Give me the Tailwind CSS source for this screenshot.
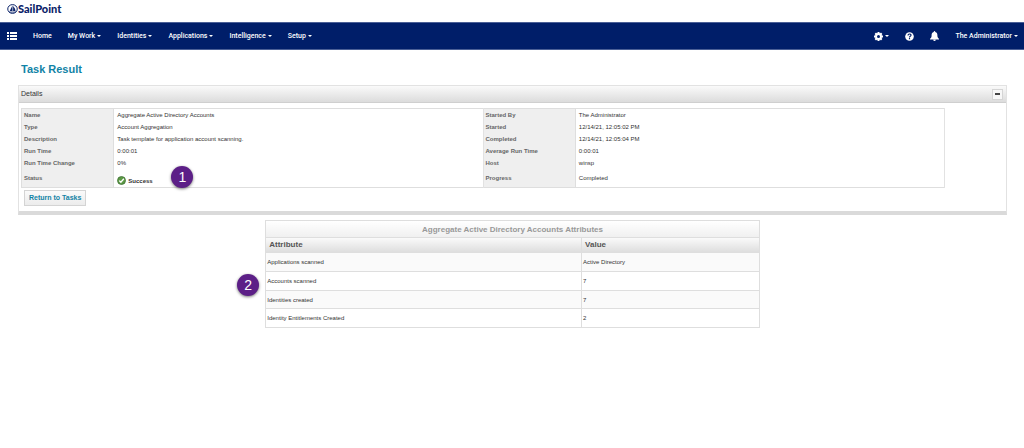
<!DOCTYPE html>
<html lang="en">
<head>
<meta charset="utf-8">
<title>Task Result</title>
<script src="https://cdn.jsdelivr.net/npm/@tailwindcss/browser@4"></script>
</head>
<body class="min-h-screen bg-white font-['Liberation_Sans',Arial,sans-serif] text-[6px] leading-[8px] text-[#333]">
<header>
  <a href="#" class="flex h-[22px] items-start pt-[3px] pl-[7px] text-[#0a2268]" aria-label="SailPoint">
    <svg class="mt-px h-[10px] w-[11px]" viewBox="0 0 22 20" fill="none" stroke="currentColor" stroke-width="2"><ellipse cx="11" cy="10" rx="9.5" ry="8.8"/><path d="M11 2.5V14H5.5Z" fill="currentColor" stroke="none"/><path d="M12.2 4C15 7 16.5 10 17 14H12.2Z" fill="currentColor" stroke="none"/><path d="M4 16.2h14" stroke-width="1.6"/></svg>
    <span class="font-[Lato,sans-serif] text-[11px] leading-[12px] font-black">SailPoint</span>
  </a>
  <nav class="flex h-[28px] items-center border-y border-[#4a5f96] bg-[#001e69] pr-[6px] pl-[7px] font-[Roboto,sans-serif] text-[7px] font-medium text-white">
    <button class="mr-4 h-[8px] w-[10px]" aria-label="Menu"><svg class="h-[8px] w-[10px]" viewBox="0 0 10 8" fill="currentColor"><path d="M0 0h2v2H0zM3 0h7v2H3zM0 3h2v2H0zM3 3h7v2H3zM0 6h2v2H0zM3 6h7v2H3z"/></svg></button>
    <div class="flex items-center gap-4">
      <a href="#">Home</a>
      <button class="flex items-center gap-[2px]">My Work <svg class="h-[2px] w-[4px]" viewBox="0 0 4 2" fill="currentColor"><path d="M0 0h4L2 2z"/></svg></button>
      <button class="flex items-center gap-[2px]">Identities <svg class="h-[2px] w-[4px]" viewBox="0 0 4 2" fill="currentColor"><path d="M0 0h4L2 2z"/></svg></button>
      <button class="flex items-center gap-[2px]">Applications <svg class="h-[2px] w-[4px]" viewBox="0 0 4 2" fill="currentColor"><path d="M0 0h4L2 2z"/></svg></button>
      <button class="flex items-center gap-[2px]">Intelligence <svg class="h-[2px] w-[4px]" viewBox="0 0 4 2" fill="currentColor"><path d="M0 0h4L2 2z"/></svg></button>
      <button class="flex items-center gap-[2px]">Setup <svg class="h-[2px] w-[4px]" viewBox="0 0 4 2" fill="currentColor"><path d="M0 0h4L2 2z"/></svg></button>
    </div>
    <div class="ml-auto flex items-center gap-4">
      <button class="flex items-center gap-[2px]" aria-label="Settings"><svg class="size-[9px]" viewBox="0 0 18 18"><g fill="currentColor"><circle cx="9" cy="9" r="6.8"/><path d="M7 0h4v18H7zM0 7h18v4H0z"/><path d="M7 0h4v18H7zM0 7h18v4H0z" transform="rotate(45 9 9)"/></g><circle cx="9" cy="9" r="3" fill="#001e69"/></svg> <svg class="h-[2px] w-[4px]" viewBox="0 0 4 2" fill="currentColor"><path d="M0 0h4L2 2z"/></svg></button>
      <button aria-label="Help"><svg class="size-[9px]" viewBox="0 0 18 18"><circle cx="9" cy="9" r="8.6" fill="currentColor"/><path d="M6 7c0-4 6-4 6-.6 0 2.2-3 2.2-3 4.4M9 12.2v2.4" fill="none" stroke="#001e69" stroke-width="2.3"/></svg></button>
      <button aria-label="Notifications"><svg class="h-[10px] w-[9px]" viewBox="0 0 18 20" fill="currentColor"><path d="M9 0c1 0 1.5.7 1.5 1.8C14 2.8 14.8 5.5 14.8 9c0 3.500 1.200 5 3.200 6.500V17H0v-1.500C2 14 3.200 12.500 3.200 9c0-3.500.8-6.200 4.300-7.200C7.500.7 8 0 9 0zM6.500 17.500h5a2.500 2.500 0 0 1-5 0z"/></svg></button>
      <button class="flex items-center gap-[2px]">The Administrator <svg class="h-[2px] w-[4px]" viewBox="0 0 4 2" fill="currentColor"><path d="M0 0h4L2 2z"/></svg></button>
    </div>
  </nav>
</header>
<main class="mr-[17px] ml-[18px]">
  <h1 class="pt-3 pb-[9px] pl-[3px] text-[11px] leading-[14px] font-bold text-[#1183a6]">Task Result</h1>
  <section class="border border-b-4 border-[#e2e2e2] border-b-[#dadada]">
    <div class="flex h-[17px] items-center justify-between border-b border-[#cfcfcf] bg-linear-to-b from-[#fafafa] to-[#dcdcdc] pr-[3px] pl-[2px]">
      <h2 class="text-[7px] font-normal">Details</h2>
      <button class="flex size-[11px] items-center justify-center border border-[#d5d5d5] bg-[#f7f7f7]" aria-label="Collapse"><span class="h-[2px] w-[5px] bg-[#444]"></span></button>
    </div>
    <div class="px-[2px] pt-[5px] pb-[5px]">
      <table class="w-[94%] table-fixed border-collapse border border-[#dedede] text-left [&_td]:border-r [&_td]:border-[#e2e2e2] [&_td]:pl-[3px] [&_th]:border-r [&_th]:border-[#dedede] [&_th]:bg-[#efefef] [&_th]:pl-[2px] [&_th]:text-[#666]">
        <colgroup><col class="w-1/10"><col class="w-4/10"><col class="w-1/10"><col class="w-4/10"></colgroup>
        <tbody>
          <tr class="h-[12px]"><th>Name</th><td>Aggregate Active Directory Accounts</td><th>Started By</th><td>The Administrator</td></tr>
          <tr class="h-[12px]"><th>Type</th><td>Account Aggregation</td><th>Started</th><td>12/14/21, 12:05:02 PM</td></tr>
          <tr class="h-[12px]"><th>Description</th><td>Task template for application account scanning.</td><th>Completed</th><td>12/14/21, 12:05:04 PM</td></tr>
          <tr class="h-[12px]"><th>Run Time</th><td>0:00:01</td><th>Average Run Time</th><td>0:00:01</td></tr>
          <tr class="h-[12px]"><th>Run Time Change</th><td>0%</td><th>Host</th><td>winsp</td></tr>
          <tr class="h-[19px]"><th>Status</th><td class="relative"><span class="flex items-center gap-[2px] pt-[6px] font-bold"><svg class="size-[9px]" viewBox="0 0 18 18"><circle cx="9" cy="9" r="8" fill="#5c9a45" stroke="#3c6e33" stroke-width="1.500"/><path d="M4.500 9.200l3.200 3.300 6-7" fill="none" stroke="#fff" stroke-width="2.600"/></svg>Success</span><span class="absolute -top-[3px] left-[57px] flex size-[22px] items-center justify-center rounded-full bg-[#5c1f87] text-[14px] font-normal text-white shadow-[0_1px_3px_#0008]">1</span></td><th>Progress</th><td>Completed</td></tr>
        </tbody>
      </table>
      <button class="mt-[2px] ml-[3px] h-[16px] border border-[#d4d4d4] bg-linear-to-b from-[#fafafa] to-[#ececec] px-[4px] text-[7px] font-bold text-[#1183a6]">Return to Tasks</button>
    </div>
  </section>
  <div class="relative mx-auto mt-[5px] w-1/2">
    <table class="w-full table-fixed border-collapse border border-[#dedede] text-left [&_td]:border [&_td]:border-[#dedede] [&_td]:pl-px">
      <caption class="h-[17px] border border-b-0 border-[#dedede] bg-linear-to-b from-white to-[#f0f0f0] pt-px text-center text-[8px] leading-[16px] font-bold text-[#999]">Aggregate Active Directory Accounts Attributes</caption>
      <colgroup><col class="w-16/25"><col class="w-9/25"></colgroup>
      <thead><tr class="h-[15px] bg-linear-to-b from-[#fafafa] to-[#dcdcdc] text-[8px] text-[#555]"><th class="border border-[#dedede] pl-[3px]">Attribute</th><th class="border border-[#dedede] pl-[3px]">Value</th></tr></thead>
      <tbody>
        <tr class="h-[19px] bg-[#fafafa]"><td>Applications scanned</td><td>Active Directory</td></tr>
        <tr class="h-[19px]"><td>Accounts scanned</td><td>7</td></tr>
        <tr class="h-[18px] bg-[#fafafa]"><td>Identities created</td><td>7</td></tr>
        <tr class="h-[19px]"><td>Identity Entitlements Created</td><td>2</td></tr>
      </tbody>
    </table>
    <span class="absolute top-[54px] -left-[28px] flex size-[22px] items-center justify-center rounded-full bg-[#5c1f87] text-[14px] text-white shadow-[0_1px_3px_#0008]">2</span>
  </div>
</main>
</body>
</html>
